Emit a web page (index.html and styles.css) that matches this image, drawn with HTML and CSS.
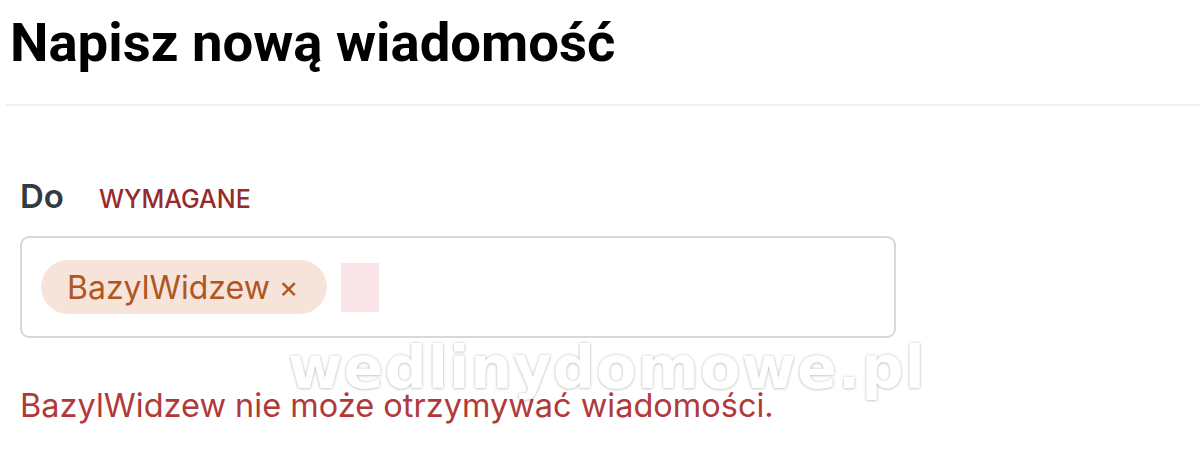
FILE: index.html
```html
<!DOCTYPE html>
<html lang="pl">
<head>
    <meta charset="UTF-8">
    <meta name="viewport" content="width=device-width, initial-scale=1.0">
    <title>Napisz nową wiadomość</title>
    <link rel="stylesheet" href="styles.css">
</head>
<body>
    <div class="page">
        <h1 class="page-title">Napisz nową wiadomość</h1>

        <div class="watermark">wedlinydomowe.pl</div>

        <div class="compose-form">
            <!-- Recipients -->
            <div class="form-group">
                <label class="field-label">
                    <span class="label-text">Do</span>
                    <span class="required">Wymagane</span>
                </label>
                <div class="recipient-box">
                    <span class="chip">BazylWidzew <span class="chip-remove">×</span></span>
                    <span class="chip-input"></span>
                </div>
            </div>

            <p class="error-msg">BazylWidzew nie może otrzymywać wiadomości.</p>
        </div>
    </div>
</body>
</html>
```

FILE: styles.css
```css
* {
    margin: 0;
    padding: 0;
    box-sizing: border-box;
}

body {
    background: #fff;
    font-family: 'Inter', 'Noto Sans', sans-serif;
    color: #222;
}

.page {
    position: relative;
    height: 459px;
    overflow: hidden;
}

.page-title {
    font-family: 'Roboto', sans-serif;
    font-weight: 700;
    font-size: 54.5px;
    line-height: 64px;
    color: #000;
    padding: 10px 0 0 4px;
    height: 106px;
    border-bottom: 2px solid #f0f0f0;
    margin-left: 6px;
}

.compose-form {
    position: relative;
    z-index: 1;
    padding: 70px 20px 0 20px;
}

.field-label {
    display: flex;
    align-items: baseline;
    gap: 35px;
    margin-bottom: 20px;
}

.label-text {
    font-size: 33px;
    font-weight: 600;
    color: #343a40;
}

.required {
    font-size: 25px;
    font-weight: 500;
    text-transform: uppercase;
    color: #962b2b;
}

.recipient-box {
    width: 876px;
    height: 102px;
    border: 2px solid #d5d8dc;
    border-radius: 9px;
    padding: 0 19px;
    display: flex;
    align-items: center;
    gap: 14px;
}

.chip {
    display: flex;
    align-items: center;
    height: 54px;
    padding: 0 28px 0 26px;
    border-radius: 27px;
    background: #f6e4da;
    color: #b0561f;
    font-size: 32px;
    white-space: pre;
}

.chip-remove {
    font-size: 30px;
}

.chip-input {
    width: 38px;
    height: 49px;
    background: #f8e4e7;
}

.error-msg {
    margin-top: 48px;
    font-size: 32.5px;
    color: #b03a3a;
}

.watermark {
    position: absolute;
    left: 288px;
    top: 346px;
    font-family: 'DejaVu Sans', sans-serif;
    font-weight: 700;
    font-size: 59px;
    line-height: 44px;
    color: #fff;
    letter-spacing: 1px;
    text-shadow: 0 0 3px rgba(0, 0, 0, 0.22), 0 1px 3px rgba(0, 0, 0, 0.12);
}
```
